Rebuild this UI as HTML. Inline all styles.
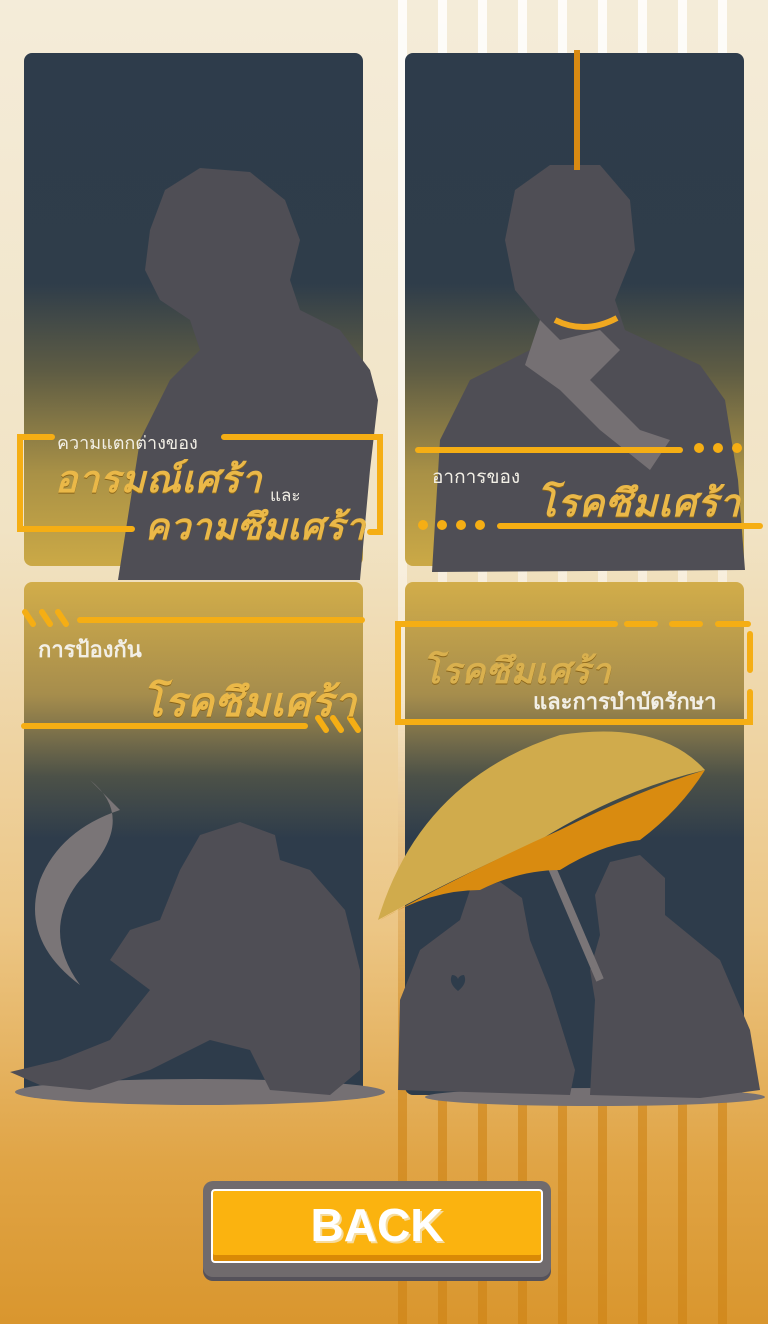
<!DOCTYPE html>
<html><head><meta charset="utf-8"><style>
*{margin:0;padding:0}
body{width:768px;height:1324px;overflow:hidden;position:relative;background:linear-gradient(180deg,#f4ecd9 0%,#f1e3c4 40%,#ecc685 70%,#e0a445 88%,#d9962e 100%);font-family:"Liberation Sans","Noto Sans CJK SC",sans-serif}
.stripes{position:absolute;left:398px;top:0;width:350px;height:1324px;background:repeating-linear-gradient(90deg,rgba(255,255,255,.85) 0 9px,transparent 9px 40px);-webkit-mask:linear-gradient(180deg,#000 0%,rgba(0,0,0,.5) 50%,transparent 80%)}
.stripes2{position:absolute;left:398px;top:700px;width:350px;height:624px;background:repeating-linear-gradient(90deg,rgba(205,130,20,.6) 0 9px,transparent 9px 40px);-webkit-mask:linear-gradient(180deg,transparent,#000 60%);}
.p{position:absolute;width:339px;height:513px;border-radius:8px;overflow:hidden}
.t{background:linear-gradient(180deg,#2e3c4b 0%,#2f3d4a 45%,#5e5c44 62%,#a99146 82%,#cba946 100%)}
.b{background:linear-gradient(180deg,#d2ad4a 0%,#a68d4c 22%,#4c5148 38%,#2e3c4b 50%,#2e3c4b 100%)}
svg{position:absolute;left:0;top:0}
.w{position:absolute;color:#f2efe6;font-weight:bold;white-space:nowrap}
.g{position:absolute;color:#eab848;font-style:italic;font-weight:bold;text-shadow:0 1px 0 #8a6418;letter-spacing:1px;white-space:nowrap}
.btn{position:absolute;left:203px;top:1181px;width:348px;height:96px;border-radius:10px;background:#706b6d;box-shadow:0 4px 0 #55525a}
.btn div{position:absolute;left:8px;top:8px;right:8px;bottom:14px;background:#fbb30f;border:2px solid #fff;border-radius:4px;box-shadow:inset 0 -6px 0 #d98a06;text-align:center;color:#fff;font-size:46px;font-weight:bold;line-height:68px;text-shadow:2px 2px 0 #f6dc9e}
</style></head><body>
<div class="stripes"></div><div class="stripes2"></div>
<div class="p t" style="left:24px;top:53px"></div>
<div class="p t" style="left:405px;top:53px"></div>
<div class="p b" style="left:24px;top:582px"></div>
<div class="p b" style="left:405px;top:582px"></div>
<svg width="768" height="1324" viewBox="0 0 768 1324">
<ellipse cx="200" cy="1092" rx="185" ry="13" fill="#757073"/>
<ellipse cx="595" cy="1097" rx="170" ry="9" fill="#757073"/>
<g fill="#4f4e55">
<path d="M118 580 L140 440 L170 380 L200 350 L190 320 L160 300 L145 270 L150 230 L165 190 L200 168 L250 172 L285 200 L300 240 L290 280 L300 310 L340 330 L370 370 L378 400 L370 470 L360 580 Z"/>
<path d="M432 572 L440 440 L470 380 L530 350 L540 320 L515 290 L505 240 L515 190 L550 165 L600 165 L630 200 L635 250 L615 300 L625 330 L700 365 L725 400 L738 480 L745 570 Z"/>
<path d="M10 1072 L60 1060 L110 1040 L150 990 L110 960 L130 930 L160 920 L180 870 L200 835 L240 822 L275 835 L280 860 L310 870 L345 910 L360 970 L360 1070 L330 1095 L270 1090 L250 1050 L210 1040 L150 1070 L90 1090 L40 1085 Z"/>
<path d="M398 1090 L400 1000 L420 950 L460 920 L470 890 L500 882 L522 898 L530 940 L550 990 L575 1070 L570 1095 Z"/>
<path d="M590 1095 L595 1000 L590 970 L600 935 L595 895 L610 862 L640 855 L665 878 L665 915 L720 960 L750 1030 L760 1090 L700 1098 Z"/>
</g>
<path d="M90 780 Q140 820 80 880 Q40 930 80 985 Q20 940 40 880 Q60 830 120 810 Z" fill="#7a7577"/>
<path d="M540 320 L560 340 L600 330 L620 350 L590 380 L640 430 L670 440 L650 470 L600 430 L560 390 L525 365 Z" fill="#757073"/>
<path d="M577 50 V170" stroke="#d98a12" stroke-width="6"/>
<path d="M555 320 Q585 335 617 318" stroke="#f0a820" stroke-width="6" fill="none"/>
<path d="M523 800 L600 980" stroke="#7a7577" stroke-width="8"/>
<path d="M378 920 Q420 780 560 735 Q660 720 705 770 Q620 790 540 840 Q450 880 378 920 Z" fill="#d0ab4c"/>
<path d="M705 770 Q640 790 560 830 Q470 870 380 920 Q430 890 480 890 Q520 870 560 870 Q600 845 640 840 Q680 810 705 770 Z" fill="#d98b10"/>
<path d="M452 975 a6 6 0 0 1 6 4 a6 6 0 0 1 6 -4 q4 8 -6 16 q-10 -8 -6 -16z" fill="#2e3c4b"/>
<g stroke="#f5ae14" stroke-width="6" fill="none" stroke-linecap="round">
<path d="M52 437 H20 V529 H132"/><path d="M224 437 H380 V532 H370"/>
<path d="M418 450 H680"/><path d="M500 526 H760"/>
<path d="M80 620 H362"/><path d="M24 726 H305"/>
<path d="M25 612 l8 12 M42 612 l8 12 M58 612 l8 12 M318 718 l8 12 M333 718 l8 12 M350 718 l8 12"/>
<path d="M615 624 H398 V722 H750 V692 M750 670 V634 M627 624 H655 M672 624 H700 M718 624 H748"/>
</g>
<g fill="#f5ae14"><circle cx="699" cy="448" r="5"/><circle cx="718" cy="448" r="5"/><circle cx="737" cy="448" r="5"/><circle cx="423" cy="525" r="5"/><circle cx="442" cy="525" r="5"/><circle cx="461" cy="525" r="5"/><circle cx="480" cy="525" r="5"/></g>
</svg>
<div class="w" style="left:57px;top:428px;font-size:18px;font-weight:normal">ความแตกต่างของ</div>
<div class="g" style="left:55px;top:450px;font-size:37px">อารมณ์เศร้า</div>
<div class="w" style="left:270px;top:482px;font-size:17px;font-weight:normal">และ</div>
<div class="g" style="left:145px;top:498px;font-size:36px">ความซึมเศร้า</div>
<div class="w" style="left:432px;top:462px;font-size:19px;font-weight:normal">อาการของ</div>
<div class="g" style="left:536px;top:472px;font-size:38px">โรคซึมเศร้า</div>
<div class="w" style="left:38px;top:632px;font-size:22px">การป้องกัน</div>
<div class="g" style="left:142px;top:670px;font-size:40px">โรคซึมเศร้า</div>
<div class="g" style="left:422px;top:644px;font-size:35px;color:#d9b04e">โรคซึมเศร้า</div>
<div class="w" style="left:533px;top:684px;font-size:22px">และการบำบัดรักษา</div>
<div class="btn"><div>BACK</div></div>
</body></html>
